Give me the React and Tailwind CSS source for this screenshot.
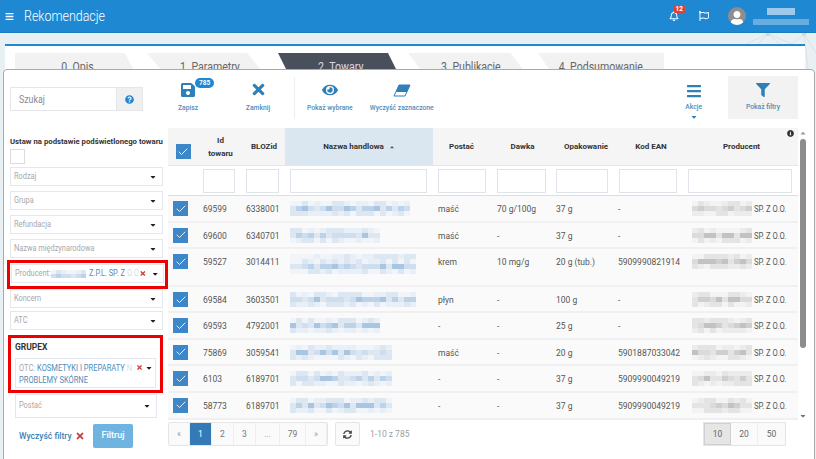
import { Check } from 'lucide-react';
import {
  FaBars, FaCaretDown, FaEye, FaFilter, FaInfoCircle, FaQuestionCircle,
  FaRegBell, FaRegFlag, FaSave, FaSyncAlt, FaTimes, FaUser, FaCaretUp,
} from 'react-icons/fa';

const font = { fontFamily: 'Roboto, sans-serif' };

// pixelated block standing in for the blurred out names in the screenshot
const Mosaic = ({ seed, cols, rows = 2, tone = 'blue', cell = 6 }) => {
  const palette = tone === 'blue'
    ? ['#f1f5f9', '#e8eff6', '#dce7f2', '#cfdeee', '#bcd2e8', '#a8c5e1']
    : ['#f3f3f3', '#ececec', '#e4e4e4', '#dbdbdb', '#cfcfcf', '#c2c2c2'];
  const cells = [];
  for (let r = 0; r < rows; r++) {
    for (let c = 0; c < cols; c++) {
      const n = Math.sin(seed * 12.9 + r * 37.7 + c * 78.2) * 43758;
      const h = n - Math.floor(n);
      const strong = rows === 1 || r === Math.floor(rows / 2);
      cells.push(palette[Math.floor(h * (strong ? 4 : 3)) + (strong ? 2 : 0)]);
    }
  }
  return (
    <div className="grid shrink-0" style={{ gridTemplateColumns: `repeat(${cols}, ${cell}px)`, gridAutoRows: `${cell - 1}px` }}>
      {cells.map((c, i) => <span key={i} style={{ background: c }} />)}
    </div>
  );
};

const Select = ({ label, className = 'h-[19px] mb-[5px]' }) => (
  <div className={`flex items-center justify-between border border-[#e3e7ee] bg-white pl-[3px] pr-[5px] ${className}`}>
    <span className="origin-left scale-x-[0.82] text-[9px] whitespace-nowrap text-[#a8a8a8]">{label}</span>
    <FaCaretDown className="text-[8px] text-[#222]" />
  </div>
);

const ToolButton = ({ icon, label, className = '' }) => (
  <div className={`flex flex-col items-center ${className}`}>
    {icon}
    <span className="mt-[5px] text-[6.75px] font-medium text-[#4f8dbb] whitespace-nowrap">{label}</span>
  </div>
);

const Tick = () => (
  <div className="flex h-[15px] w-[15px] items-center justify-center bg-[#3d87c8]">
    <Check className="h-[12px] w-[12px] text-white" strokeWidth={1.75} />
  </div>
);

const rows = [
  { id: '69599', bloz: '6338001', form: 'maść', dose: '70 g/100g', pack: '37 g', ean: '-', seed: 3, cols: 20, h: 'h-[26.6px]' },
  { id: '69600', bloz: '6340701', form: 'maść', dose: '-', pack: '37 g', ean: '-', seed: 5, cols: 15, h: 'h-[26.6px]' },
  { id: '59527', bloz: '3014411', form: 'krem', dose: '10 mg/g', pack: '20 g (tub.)', ean: '5909990821914', seed: 7, cols: 21, h: 'h-[38px]', tall: true },
  { id: '69584', bloz: '3603501', form: 'płyn', dose: '-', pack: '100 g', ean: '-', seed: 11, cols: 21, h: 'h-[26px]' },
  { id: '69593', bloz: '4792001', form: '-', dose: '-', pack: '25 g', ean: '-', seed: 13, cols: 15, h: 'h-[26.6px]' },
  { id: '75869', bloz: '3059541', form: 'maść', dose: '-', pack: '20 g', ean: '5901887033042', seed: 17, cols: 17, h: 'h-[26.6px]' },
  { id: '6103', bloz: '6189701', form: '-', dose: '-', pack: '37 g', ean: '5909990049219', seed: 19, cols: 17, h: 'h-[26.6px]' },
  { id: '58773', bloz: '6189701', form: '-', dose: '-', pack: '37 g', ean: '5909990049219', seed: 23, cols: 17, h: 'h-[27px]' },
];

const headers = [
  { w: 'w-[30px]' },
  { w: 'w-[45px]', label: <>Id<br />towaru</> },
  { w: 'w-[42px]', label: 'BLOZid' },
  { w: 'w-[148px]', label: 'Nazwa handlowa', active: true },
  { w: 'w-[57px]', label: 'Postać' },
  { w: 'w-[65px]', label: 'Dawka' },
  { w: 'w-[62px]', label: 'Opakowanie' },
  { w: 'w-[68px]', label: 'Kod EAN' },
  { w: 'w-[113px]', label: 'Producent' },
];

const inputs = [
  { ml: 'ml-[5px]', w: 'w-[32px]' },
  { ml: 'ml-[11px]', w: 'w-[33px]' },
  { ml: 'ml-[11px]', w: 'w-[137px]' },
  { ml: 'ml-[11px]', w: 'w-[48px]' },
  { ml: 'ml-[11px]', w: 'w-[49px]' },
  { ml: 'ml-[10px]', w: 'w-[52px]' },
  { ml: 'ml-[11px]', w: 'w-[58px]' },
  { ml: 'ml-[11px]', w: 'w-[104px]' },
];

const tabs = [
  { label: '0. Opis', w: 'w-[125px]', clip: '[clip-path:polygon(0_0,88%_0,100%_100%,0_100%)]', text: 'text-[#666]', bg: 'bg-[#f2f2f2]', ml: 'ml-[10px]' },
  { label: '1. Parametry', w: 'w-[125px]', clip: '[clip-path:polygon(0_0,80%_0,100%_100%,20%_100%)]', text: 'text-[#666]', bg: 'bg-[#f2f2f2]', ml: 'ml-[7px]' },
  { label: '2. Towary', w: 'w-[125px]', clip: '[clip-path:polygon(0_0,88%_0,100%_100%,12%_100%)]', text: 'text-[#d9d9e0]', bg: 'bg-[#4a4f5c]', ml: 'ml-[6px]' },
  { label: '3. Publikacje', w: 'w-[125px]', clip: '[clip-path:polygon(0_0,82%_0,100%_100%,18%_100%)]', text: 'text-[#666]', bg: 'bg-[#f2f2f2]', ml: 'ml-[5px]' },
  { label: '4. Podsumowanie', w: 'w-[126px]', clip: '[clip-path:polygon(0_0,100%_0,100%_100%,16%_100%)]', text: 'text-[#666]', bg: 'bg-[#f2f2f2]', ml: 'ml-[5px]' },
];

const pages = [
  { t: '«', w: 'w-[21px]', c: 'text-[#999] bg-[#fafafa]' },
  { t: '1', w: 'w-[22px]', c: 'text-white bg-[#337ab7]' },
  { t: '2', w: 'w-[22px]', c: 'text-[#777] bg-[#fafafa]' },
  { t: '3', w: 'w-[22px]', c: 'text-[#777] bg-[#fafafa]' },
  { t: '...', w: 'w-[24px]', c: 'text-[#999] bg-[#fafafa]' },
  { t: '79', w: 'w-[26px]', c: 'text-[#777] bg-[#fafafa]' },
  { t: '»', w: 'w-[21px]', c: 'text-[#999] bg-[#fafafa]' },
];

export default function App() {
  return (
    <div className="relative h-[459px] w-[816px] overflow-hidden bg-[#e9f0f3]" style={font}>
      {/* faint network picture behind the page */}
      <svg className="absolute right-0 top-[33px] h-[36px] w-[70px] text-[#d3dadd]" viewBox="0 0 70 36" fill="none" stroke="currentColor" strokeWidth="0.6">
        <path d="M0 11 L22 1 L34 11 M22 1 L12 11 M22 1 L46 11 M58 1 L46 11 M58 1 L70 20 M58 1 L62 36" />
        <circle cx="22" cy="1" r="2" fill="currentColor" />
        <circle cx="58" cy="1" r="2" fill="currentColor" />
      </svg>

      {/* top bar */}
      <div className="relative flex h-[33px] items-center border-b border-[#1a7cc2] bg-[#1e88d2] pl-[5px] pr-[7px] text-white">
        <FaBars className="text-[9px]" />
        <span className="ml-[10px] origin-left scale-x-[0.83] text-[15px] font-light">Rekomendacje</span>
        <div className="ml-auto flex items-center">
          <div className="relative">
            <FaRegBell className="text-[10px]" />
            <span className="absolute -right-[6px] -top-[6px] rounded-[1px] bg-[#d9433b] px-[2px] text-[6.5px] font-bold leading-[8px]">12</span>
          </div>
          <FaRegFlag className="ml-[20px] text-[10px]" />
          <div className="ml-[19px] flex h-[18px] w-[18px] items-center justify-center overflow-hidden rounded-full bg-[#8e8e8e]">
            <FaUser className="mt-[3px] text-[14px] text-white" />
          </div>
          <div className="ml-[7px] flex w-[56px] flex-col items-center gap-[4px]">
            <div className="h-[7px] w-[28px] bg-[#9dcaea]" />
            <div className="h-[6px] w-[56px] bg-[#68addf]" />
          </div>
        </div>
      </div>

      {/* background panel with wizard tabs */}
      <div className="relative ml-[5px] mr-[11px] mt-[11px] h-[60px] border-t-2 border-[#1e88d2] bg-white pt-[7px]">
        <div className="flex">
          {tabs.map((t) => (
            <div key={t.label} className={`flex h-[30px] items-center justify-center pb-[2px] ${t.w} ${t.ml} ${t.clip} ${t.bg} ${t.text}`}>
              <span className="scale-x-[0.88] text-[12px] whitespace-nowrap">{t.label}</span>
            </div>
          ))}
        </div>
      </div>

      {/* modal */}
      <div className="absolute bottom-[-10px] left-[3px] right-[1px] top-[69px] flex rounded-[4px] border border-[#a9a9a9] bg-white pb-[10px]">
        {/* filters column */}
        <div className="w-[162px] shrink-0 pl-[6px] pr-[3px]">
          <div className="mt-[17px] flex h-[24px] w-[133px] border border-[#e6e6ea]">
            <div className="flex flex-1 items-center pl-[8px]">
              <span className="origin-left scale-x-[0.88] text-[10px] text-[#8a8a8a]">Szukaj</span>
            </div>
            <div className="flex w-[26px] items-center justify-center border-l border-[#e6e6ea] bg-[#f0f0f0]">
              <FaQuestionCircle className="text-[9px] text-[#1e88d2]" />
            </div>
          </div>
          <div className="mt-[25px] text-[7.75px] font-bold leading-[12px] text-[#333] whitespace-nowrap">Ustaw na podstawie podświetlonego towaru</div>
          <div className="mb-[3px] mt-[1px] h-[15px] w-[15px] border border-[#dcdcdc]" />
          <Select label="Rodzaj" />
          <Select label="Grupa" />
          <Select label="Refundacja" />
          <Select label="Nazwa międzynarodowa" />
          <div className="-ml-[3px] -mr-[5px] -mt-[3px] h-[29px] border-[3px] border-[#ee0000] px-[1px] pt-[1px]">
            <div className="flex h-[19px] w-[153px] items-center border border-[#e3e7ee] pl-[3px] pr-[5px] text-[8.75px] whitespace-nowrap">
              <span className="w-[35px] origin-left scale-x-[0.85] text-[#a8a8a8]">Producent:</span>
              <div className="ml-[1px]"><Mosaic seed={4} cols={7} rows={2} cell={5} /></div>
              <span className="ml-[3px] w-[36px] origin-left scale-x-[0.85] text-[#4f8dbb]">Z.P.L. SP. Z</span>
              <span className="ml-[2px] w-[13px] origin-left scale-x-[0.85] text-[#cfdfec]">O.O</span>
              <FaTimes className="ml-auto text-[7px] text-[#c9403a]" />
              <FaCaretDown className="ml-[6px] text-[8px] text-[#222]" />
            </div>
          </div>
          <Select label="Koncern" className="h-[19px] mb-[3px]" />
          <Select label="ATC" />
          <div className="-ml-[2px] h-[58px] border-[3px] border-[#ee0000] px-[4px]">
            <div className="mt-[3px] text-[8.5px] font-bold leading-[12px] text-[#333]">GRUPEX</div>
            <div className="mt-[5px] flex h-[30px] border border-[#e3e7ee] pl-[3px] pr-[2px] pt-[3px] text-[8.75px] leading-[12px] whitespace-nowrap">
              <div className="w-[116px] origin-left scale-x-[0.86]">
                <span className="text-[#a8a8a8]">OTC: </span>
                <span className="text-[#4f8dbb]">KOSMETYKI I PREPARATY </span>
                <span className="text-[#cfdfec]">N</span>
                <br />
                <span className="text-[#4f8dbb]">PROBLEMY SKÓRNE</span>
              </div>
              <FaTimes className="ml-[1px] mt-[2px] text-[7px] text-[#c9403a]" />
              <FaCaretDown className="ml-auto mt-[2px] text-[8px] text-[#222]" />
            </div>
          </div>
          <div className="mt-[1px] pl-[5px] pr-[6px]">
            <Select label="Postać" className="h-[24px]" />
          </div>
          <div className="mt-[6px] flex items-center pl-[9px]">
            <span className="w-[53px] text-[8.5px] font-medium text-[#3f7fb5] whitespace-nowrap">Wyczyść filtry</span>
            <FaTimes className="ml-[3px] text-[10px] text-[#c9403a]" />
            <div className="ml-[8px] flex h-[24px] w-[40px] items-center justify-center rounded-[2px] bg-[#6fb3e0] text-[9px] font-medium text-white">Filtruj</div>
          </div>
        </div>

        {/* main column */}
        <div className="relative min-w-0 flex-1 pl-[2px]">
          {/* toolbar */}
          <div className="flex h-[58px] items-start">
            <div className="relative mt-[12px] w-[40px]">
              <ToolButton icon={<FaSave className="text-[16px] text-[#2f7fb8]" />} label="Zapisz" />
              <span className="absolute -top-[4px] left-[27px] rounded-full bg-[#1e88d2] px-[4px] text-[6.5px] font-bold leading-[10px] text-white">785</span>
            </div>
            <ToolButton className="mt-[11px] ml-[38px] w-[24px]" icon={<FaTimes className="text-[17px] text-[#2f7fb8]" />} label="Zamknij" />
            <div className="ml-[24px] mt-[7px] h-[42px] w-px bg-[#eeeeee]" />
            <ToolButton className="mt-[12px] ml-[12px]" icon={<FaEye className="text-[16px] text-[#2f7fb8]" />} label="Pokaż wybrane" />
            <ToolButton
              className="mt-[12px] ml-[17px]"
              icon={(
                <svg className="h-[16px] w-[18px] text-[#2f7fb8]" viewBox="0 0 18 16" fill="none" stroke="currentColor">
                  <path d="M6 3 H17 L12 14 H1 Z" strokeWidth="1" />
                  <path d="M6 3 H17 L14 10 H3 Z" fill="currentColor" stroke="none" />
                </svg>
              )}
              label="Wyczyść zaznaczone"
            />
            <div className="ml-auto mr-[26px] mt-[13px] flex flex-col items-center">
              <FaBars className="text-[16px] text-[#2f7fb8]" />
              <span className="mt-[3px] text-[6.75px] font-medium text-[#4f8dbb]">Akcje</span>
              <FaCaretDown className="mt-[1px] text-[8px] text-[#2f7fb8]" />
            </div>
            <div className="mr-[16px] mt-[6px] flex h-[43px] w-[70px] flex-col items-center justify-center bg-[#f2f2f2]">
              <FaFilter className="text-[14px] text-[#2f7fb8]" />
              <span className="mt-[5px] text-[6.75px] font-medium text-[#4f8dbb]">Pokaż filtry</span>
            </div>
          </div>

          {/* table + scrollbar */}
          <div className="flex">
            <div className="w-[630px] shrink-0">
              <div className="flex h-[38px] border-b border-[#e5e5e5] bg-[#f5f5f5] text-[8px] font-bold text-[#333]">
                {headers.map((h, i) => (
                  <div key={i} className={`flex items-center justify-center text-center leading-[13px] ${h.w} ${h.active ? 'bg-[#dae6f0]' : ''}`}>
                    {i === 0 ? <div className="mt-[10px]"><Tick /></div> : h.label}
                    {h.active && <FaCaretUp className="ml-[5px] text-[6px] text-[#555]" />}
                  </div>
                ))}
              </div>
              <div className="flex h-[30px] items-center border-b border-[#dedede] pl-[30px]">
                {inputs.map((c, i) => (
                  <div key={i} className={`h-[24px] shrink-0 border border-[#dfe3ea] bg-white ${c.w} ${c.ml}`} />
                ))}
              </div>
              {rows.map((r) => (
                <div key={r.id} className={`flex border-b-2 border-[#f0f0f0] bg-[#fafafa] text-[8.5px] text-[#555] ${r.h}`}>
                  <div className="w-[30px] pl-[5px] pt-[5px]"><Tick /></div>
                  <div className="w-[45px] pl-[5px] pt-[7px]">{r.id}</div>
                  <div className="w-[42px] pl-[3px] pt-[7px]">{r.bloz}</div>
                  <div className="w-[148px] pl-[5px] pt-[5px]">
                    <Mosaic seed={r.seed} cols={r.cols} rows={r.tall ? 4 : 3} />
                  </div>
                  <div className="w-[57px] pl-[5px] pt-[7px]">{r.form}</div>
                  <div className="w-[65px] pl-[7px] pt-[7px]">{r.dose}</div>
                  <div className="w-[62px] pl-[1px] pt-[7px]">{r.pack}</div>
                  <div className="w-[68px] pl-[1px] pt-[7px]">{r.ean}</div>
                  <div className="flex w-[113px] items-start pl-[7px] pt-[5px]">
                    <Mosaic seed={r.seed + 1} cols={10} rows={3} tone="gray" />
                    <span className="ml-[2px] mt-[2px] origin-left scale-x-[0.9] whitespace-nowrap">SP. Z O.O.</span>
                  </div>
                </div>
              ))}
            </div>
            <FaInfoCircle className="absolute left-[621px] top-[60px] text-[7px] text-[#333]" />
            <div className="flex w-[10px] flex-col items-center">
              <FaCaretUp className="mt-[1px] text-[8px] text-[#999]" />
              <div className="mt-[2px] h-[209px] w-[6px] rounded-full bg-[#8c8c8c]" />
              <FaCaretDown className="mt-[64px] text-[8px] text-[#777]" />
            </div>
          </div>

          {/* pagination */}
          <div className="mt-[2px] flex h-[24px] items-center text-[8.5px]">
            <div className="flex h-full overflow-hidden rounded-[2px] border border-[#e5e5e5]">
              {pages.map((p, i) => (
                <div key={i} className={`flex items-center justify-center border-r border-[#eeeeee] ${p.w} ${p.c}`}>{p.t}</div>
              ))}
            </div>
            <div className="ml-[7px] flex h-full w-[25px] items-center justify-center rounded-[2px] border border-[#e5e5e5] bg-[#fafafa]">
              <FaSyncAlt className="text-[9px] text-[#444]" />
            </div>
            <span className="ml-[10px] text-[8.5px] text-[#a0a0a0]">1-10 z 785</span>
            <div className="ml-auto mr-[28px] flex h-full border border-[#e5e5e5] text-[#666]">
              <div className="flex w-[27px] items-center justify-center border border-[#cfcfcf] bg-[#e6e6e6]">10</div>
              <div className="flex w-[27px] items-center justify-center border-r border-[#eeeeee] bg-[#fafafa]">20</div>
              <div className="flex w-[27px] items-center justify-center bg-[#fafafa]">50</div>
            </div>
          </div>
        </div>
      </div>
    </div>
  );
}
